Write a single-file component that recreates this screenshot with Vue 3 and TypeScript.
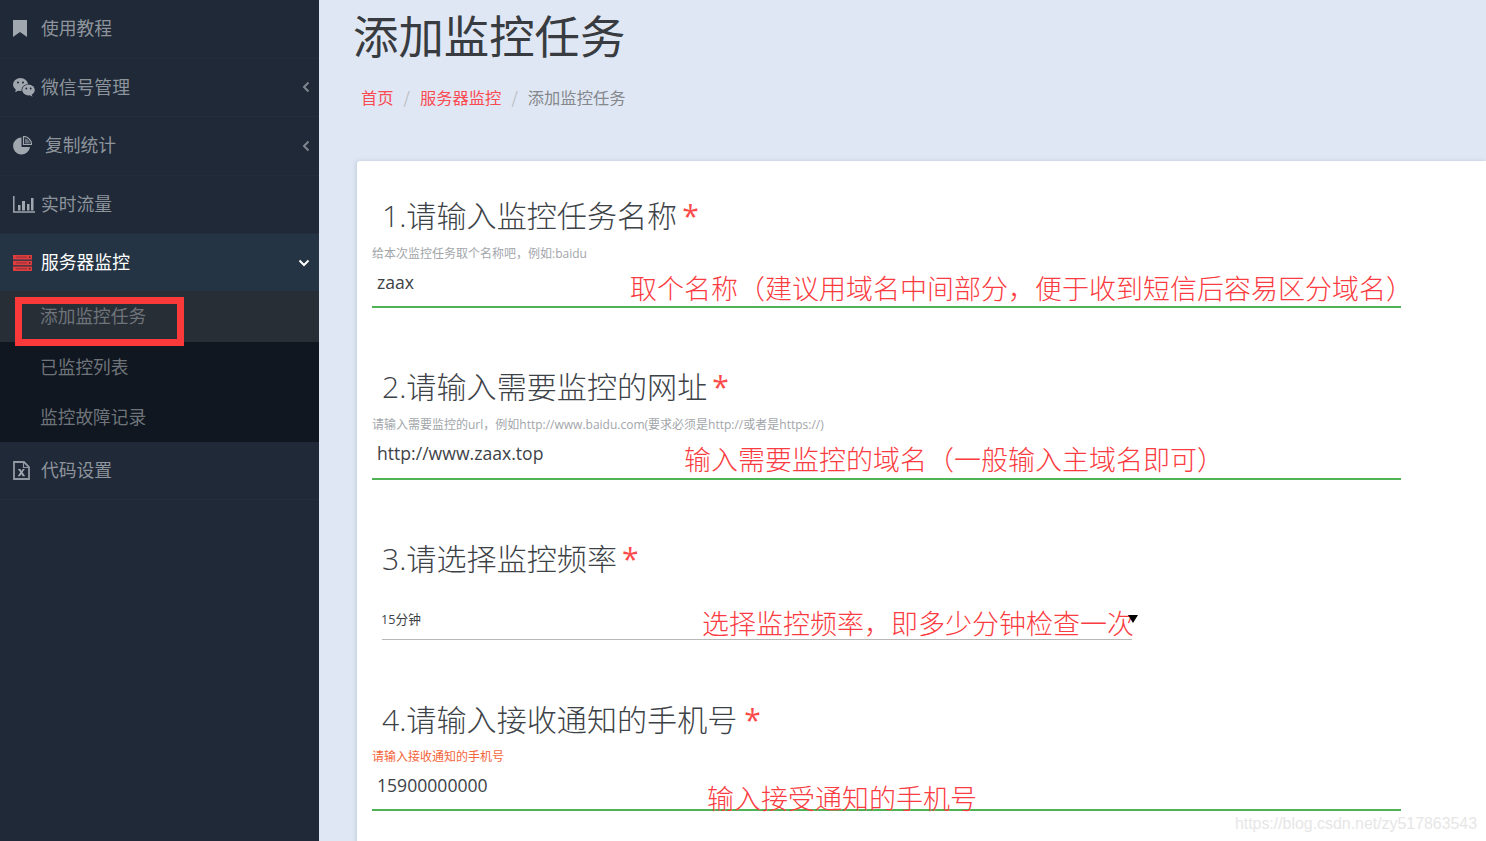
<script setup lang="ts">
interface Field {
  no: string
  label: string
  hint: string
  value: string
  note: string
  noteLeft: number
  noteTop: number
  mod: string
}
const fields: Field[] = [
  { no: '1', label: '请输入监控任务名称', hint: '给本次监控任务取个名称吧，例如:baidu', value: 'zaax', note: '取个名称（建议用域名中间部分，便于收到短信后容易区分域名）', noteLeft: 258, noteTop: 4.5, mod: 'first' },
  { no: '2', label: '请输入需要监控的网址', hint: '请输入需要监控的url，例如http://www.baidu.com(要求必须是http://或者是https://)', value: 'http://www.zaax.top', note: '输入需要监控的域名（一般输入主域名即可）', noteLeft: 312, noteTop: 5, mod: 'second' },
]
</script>

<template>
  <div class="page">
    <aside class="side">
      <a class="item">
        <span class="slot">
          <svg width="14" height="17" viewBox="0 0 14 17"><path d="M0 0h14v17l-7-5-7 5z" fill="#a1a7af" /></svg>
        </span>
        <span class="t">使用教程</span>
      </a>
      <a class="item">
        <span class="slot">
          <svg width="22" height="19" viewBox="0 0 22 19">
            <ellipse cx="7.500" cy="6.500" rx="7.500" ry="6.500" fill="#a1a7af" />
            <path d="M3 10.500l-.8 3.800L6.500 12z" fill="#a1a7af" />
            <ellipse cx="15.500" cy="12" rx="7" ry="6" fill="#1f2937" />
            <ellipse cx="15.500" cy="12" rx="6.300" ry="5.400" fill="#a1a7af" />
            <path d="M18.500 16l1 2.800-3.800-2.200z" fill="#a1a7af" />
            <circle cx="5" cy="4.500" r="1" fill="#1f2937" />
            <circle cx="10" cy="4.500" r="1" fill="#1f2937" />
            <circle cx="13.300" cy="10.500" r=".9" fill="#1f2937" />
            <circle cx="17.700" cy="10.500" r=".9" fill="#1f2937" />
          </svg>
        </span>
        <span class="t">微信号管理</span>
        <svg class="arrow" width="8" height="12" viewBox="0 0 8 12"><path d="M6.500 1.500L2 6l4.500 4.500" fill="none" stroke="#7f8690" stroke-width="2" /></svg>
      </a>
      <a class="item">
        <span class="slot">
          <svg width="19" height="19" viewBox="0 0 19 19">
            <path d="M8.500 1.500A8.500 8.500 0 1 0 17 11H8.500z" fill="#a1a7af" />
            <path d="M10.500.500a8 8 0 0 1 8 8h-8z" fill="none" stroke="#a1a7af" stroke-width="1.200" />
            <path d="M12 2.500a6 6 0 0 1 5 5h-5z" fill="#6d747e" />
          </svg>
        </span>
        <span class="t t-wide">复制统计</span>
        <svg class="arrow" width="8" height="12" viewBox="0 0 8 12"><path d="M6.500 1.500L2 6l4.500 4.500" fill="none" stroke="#7f8690" stroke-width="2" /></svg>
      </a>
      <a class="item">
        <span class="slot">
          <svg width="22" height="17" viewBox="0 0 22 17">
            <path d="M.8 0v16H22" fill="none" stroke="#a1a7af" stroke-width="1.500" />
            <path d="M5 9h2.500v5.500H5zM9 5h3v9.500H9zM14 8h2.500v6.500H14zM18 2h2.500v12.500H18z" fill="#a1a7af" />
          </svg>
        </span>
        <span class="t">实时流量</span>
      </a>
      <a class="item active">
        <span class="slot">
          <svg width="19" height="16" viewBox="0 0 19 16">
            <path d="M0 0h19v4.500H0zM0 5.700h19v4.500H0zM0 11.400h19v4.600H0z" fill="#de3d3d" />
            <path d="M3 2.200h11M3 7.900h11M3 13.700h11" stroke="#a5323a" stroke-width="1.200" />
            <path d="M16 1.500h1.500v1.500H16zM16 7.200h1.500v1.500H16zM16 13h1.500v1.500H16z" fill="#5c2028" />
          </svg>
        </span>
        <span class="t">服务器监控</span>
        <svg class="arrow" width="12" height="8" viewBox="0 0 12 8"><path d="M1.500 1.500L6 6l4.500-4.500" fill="none" stroke="#fff" stroke-width="2" /></svg>
      </a>
      <div class="sub">
        <a class="sub-item current"><span class="st">添加监控任务</span><span class="mark"></span></a>
        <a class="sub-item"><span class="st">已监控列表</span></a>
        <a class="sub-item"><span class="st">监控故障记录</span></a>
      </div>
      <a class="item">
        <span class="slot">
          <svg width="17" height="19" viewBox="0 0 17 19">
            <path d="M1 1h10l5 5v12H1z" fill="none" stroke="#9299a2" stroke-width="1.800" />
            <path d="M10.500 1v5.500H16" fill="none" stroke="#9299a2" stroke-width="1.200" />
            <path d="M4.800 8h2.600l1.100 1.900L9.700 8h2.200L9.500 11.300l2.700 4h-2.600l-1.300-2.200-1.300 2.200H4.700l2.600-4z" fill="#a1a7af" />
          </svg>
        </span>
        <span class="t">代码设置</span>
      </a>
    </aside>

    <main class="main">
      <h1 class="title">添加监控任务</h1>
      <nav class="crumb">
        <a>首页</a><i>/</i><a>服务器监控</a><i>/</i><span>添加监控任务</span>
      </nav>

      <section class="card">
        <div v-for="f in fields" :key="f.no" class="field" :class="f.mod">
          <h2 class="label">{{ f.no }}.{{ f.label }}<b>*</b></h2>
          <p class="hint">{{ f.hint }}</p>
          <div class="input">
            {{ f.value }}
            <span class="note" :style="{ left: f.noteLeft + 'px', top: f.noteTop + 'px' }">{{ f.note }}</span>
          </div>
        </div>

        <div class="field third">
          <h2 class="label">3.请选择监控频率<b>*</b></h2>
          <div class="select">
            15分钟
            <span class="note sel-note">选择监控频率，即多少分钟检查一次</span>
            <span class="caret"></span>
          </div>
        </div>

        <div class="field fourth">
          <h2 class="label">4.请输入接收通知的手机号 <b>*</b></h2>
          <p class="hint warn">请输入接收通知的手机号</p>
          <div class="input">
            15900000000
            <span class="note tel-note">输入接受通知的手机号</span>
          </div>
        </div>
      </section>
      <span class="wm">https://blog.csdn.net/zy517863543</span>
    </main>
  </div>
</template>

<style>
html, body { margin: 0; overflow: hidden; }
</style>

<style scoped>
.page {
  display: flex;
  width: 1486px;
  height: 841px;
  overflow: hidden;
  background: #e0e7f4;
  font-family: "Open Sans", "Noto Sans CJK SC", sans-serif;
}
.side {
  flex: 0 0 319px;
  background: #1f2937;
  font-size: 17.800px;
  color: #8e949c;
  font-family: "Noto Sans CJK SC", sans-serif;
}
.item {
  display: flex;
  align-items: center;
  box-sizing: border-box;
  height: 58.600px;
  padding: 0 9px 0 13px;
  border-bottom: 1px solid #232d3b;
}
.slot { flex: 0 0 28px; display: flex; align-items: center; }
.t { padding-bottom: 3px; }
.t-wide { margin-left: 4px; }
.arrow { margin-left: auto; }
.active {
  height: 56.400px;
  background: #243444;
  border-bottom: 0;
  color: #fff;
}
.sub { background: #101720; font-size: 17.700px; }
.sub-item {
  display: flex;
  align-items: center;
  box-sizing: border-box;
  height: 50px;
  padding-left: 40px;
  color: #6f747a;
  position: relative;
}
.st { padding-bottom: 2px; }
.current { height: 51px; background: #272e36; }
.mark {
  position: absolute;
  left: 15px;
  top: 6px;
  width: 155px;
  height: 35px;
  border: 7px solid #fa3a3a;
}
.main { flex: 1; position: relative; padding-left: 34px; min-width: 0; }
.title {
  margin: 3px 0 0;
  font-family: "Noto Sans CJK SC", sans-serif;
  font-weight: 400;
  font-size: 45.400px;
  line-height: 62px;
  color: #383c40;
}
.crumb {
  display: flex;
  align-items: center;
  height: 24px;
  margin: 20px 0 0 8px;
  font-family: "Noto Sans CJK SC", sans-serif;
  font-size: 16.300px;
  color: #84888c;
}
.crumb a { color: #fa4a52; }
.crumb i { font-style: normal; margin: 0 10px; color: #b8bcc2; }
.card {
  margin: 52px 0 0 4px;
  height: 700px;
  background: #fff;
  border-radius: 3px 0 0 0;
  box-shadow: -1px 0 4px rgba(120, 135, 160, .3);
  padding: 1px 0 0 15px;
  color: #3d4247;
}
.field { width: 1029px; position: relative; }
.first { padding-top: 33px; }
.second { padding-top: 58px; }
.third { padding-top: 58.500px; }
.fourth { padding-top: 59px; }
.label {
  margin: 0 0 0 10px;
  font-weight: 300;
  font-size: 30.100px;
  line-height: 42px;
  color: #3d4247;
}
.label b { font-weight: 400; color: #fa4a4a; margin-left: 5px; }
.fourth .label b { margin-left: -1px; }
.hint {
  margin: 8px 0 0;
  font-size: 12px;
  line-height: 18px;
  color: #a2a6aa;
}
.warn { color: #f4643a; margin-top: 7px; }
.input {
  position: relative;
  height: 44.500px;
  line-height: 38px;
  padding-left: 5px;
  font-size: 17.600px;
  border-bottom: 2px solid #4fb355;
  box-sizing: border-box;
}
.second .input { height: 46px; line-height: 39px; }
.fourth .input { height: 45px; }
.select {
  position: relative;
  width: 750px;
  margin: 20px 0 0 10px;
  height: 40px;
  line-height: 38px;
  font-size: 12.700px;
  text-indent: -1px;
  border-bottom: 1px solid #b8b8b8;
  box-sizing: border-box;
}
.note {
  position: absolute;
  white-space: nowrap;
  text-indent: 0;
  font-family: "Noto Sans CJK SC", sans-serif;
  font-weight: 300;
  font-size: 27px;
  line-height: 40px;
  color: #fa3c42;
}
.sel-note { left: 320px; top: 3px; }
.tel-note { left: 335px; top: 11.500px; }
.caret {
  position: absolute;
  right: -6px;
  top: 15px;
  width: 0;
  height: 0;
  border-left: 5px solid transparent;
  border-right: 5px solid transparent;
  border-top: 8px solid #000;
}
.wm {
  position: absolute;
  right: 9px;
  bottom: 8px;
  font-family: "Liberation Sans", sans-serif;
  font-size: 15.900px;
  color: #e6e6e6;
}
</style>
